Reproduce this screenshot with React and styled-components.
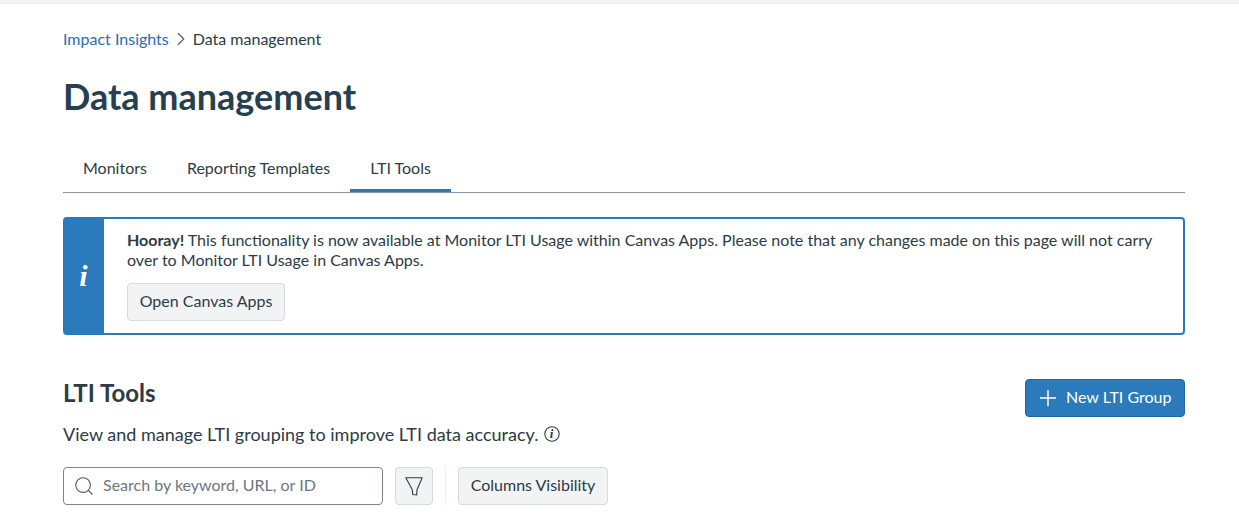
import React from "react";
import styled, { createGlobalStyle } from "styled-components";
import { ChevronRight, Search } from "lucide-react";

const GlobalStyle = createGlobalStyle`
  html, body {
    margin: 0;
    padding: 0;
    height: 100%;
    overflow: hidden;
    background: #fff;
    font-family: Lato, "Liberation Sans", sans-serif;
    color: #2d3b45;
  }
`;

const TopStrip = styled.div`
  height: 3px;
  background: #f2f4f4;
  border-bottom: 1px solid #eceeee;
`;

const Page = styled.main`
  padding: 23px 54px 0 63px;
`;

const Breadcrumbs = styled.nav`
  display: flex;
  align-items: center;
  height: 24px;
  font-size: 16px;
  line-height: 24px;
`;

const CrumbLink = styled.a`
  color: #2b6cb0;
`;

const CrumbSeparator = styled.span`
  display: flex;
  width: 24px;
  justify-content: center;
  color: #5f6b75;
`;

const Title = styled.h1`
  margin: 22px 0 0;
  font-size: 36px;
  line-height: 46px;
  font-weight: 700;
  color: #273f4f;
`;

const TabList = styled.div`
  display: flex;
  margin-top: 27px;
  height: 46px;
  border-bottom: 1px solid #8b96a2;
`;

const Tab = styled.div`
  height: 43px;
  padding: 0 20px;
  font-size: 16px;
  line-height: 43px;
  color: #2d3b45;
  border-bottom: ${(p) => (p.$active ? "3px solid #2b7abc" : "3px solid transparent")};
`;

const Alert = styled.section`
  display: flex;
  box-sizing: border-box;
  margin-top: 24px;
  height: 118px;
  border: 2px solid #2b7abc;
  border-radius: 4px;
`;

const AlertBadge = styled.div`
  display: flex;
  flex: 0 0 39px;
  align-items: center;
  justify-content: center;
  background: #2b7abc;
  color: #fff;
`;

const InfoGlyph = styled.span`
  font-family: "Liberation Serif", serif;
  font-size: 30px;
  font-style: italic;
  font-weight: 700;
  line-height: 1;
  margin-left: -2px;
`;

const AlertBody = styled.div`
  padding: 11px 24px 0 23px;
  font-size: 16px;
  line-height: 20px;
`;

const Button = styled.button`
  box-sizing: border-box;
  display: inline-flex;
  align-items: center;
  justify-content: center;
  height: 38px;
  padding: 0 12px 3px;
  font-family: inherit;
  font-size: 16px;
  color: #2d3b45;
  background: #f2f3f4;
  border: 1px solid #d5dadd;
  border-radius: 4px;
  white-space: nowrap;
`;

const AlertButton = styled(Button)`
  width: 158px;
  margin-top: 13px;
`;

const SectionHeader = styled.div`
  display: flex;
  justify-content: space-between;
  margin-top: 44px;
`;

const SectionTitle = styled.h2`
  margin: 0;
  font-size: 24px;
  line-height: 28px;
  font-weight: 700;
  color: #2d3b45;
`;

const Description = styled.p`
  display: flex;
  align-items: center;
  gap: 6px;
  margin: 15px 0 0;
  font-size: 18px;
  line-height: 24px;
`;

const PrimaryButton = styled(Button)`
  justify-content: flex-start;
  gap: 10px;
  width: 160px;
  padding: 0 0 3px 14px;
  color: #fff;
  background: #2b7abc;
  border-color: #24659c;

  svg {
    margin-top: 3px;
  }
`;

const Toolbar = styled.div`
  display: flex;
  align-items: center;
  margin-top: 21px;
`;

const SearchBox = styled.label`
  box-sizing: border-box;
  display: flex;
  align-items: center;
  gap: 8px;
  width: 320px;
  height: 38px;
  padding: 0 9px;
  border: 1px solid #79858f;
  border-radius: 4px;
  color: #4d5a64;
`;

const SearchInput = styled.input`
  flex: 1;
  min-width: 0;
  padding: 0 0 3px;
  border: 0;
  outline: 0;
  font-family: inherit;
  font-size: 16px;
  color: #2d3b45;

  &::placeholder {
    color: #6b7780;
    opacity: 1;
  }
`;

const IconButton = styled(Button)`
  width: 38px;
  margin-left: 12px;
  padding: 0;
`;

const Divider = styled.span`
  width: 1px;
  height: 38px;
  margin: 0 12px;
  background: #eceeef;
`;

const ColumnsButton = styled(Button)`
  width: 150px;
`;

const PlusIcon = () => (
  <svg width="16" height="16" viewBox="0 0 16 16" aria-hidden="true">
    <path d="M8 0v16M0 8h16" fill="none" stroke="currentColor" strokeWidth="1.5" />
  </svg>
);

const FunnelIcon = () => (
  <svg width="18" height="19" viewBox="0 0 18 19" aria-hidden="true">
    <path d="M.8.8h16.4L12 12.8l-.3 5.2-4-.5-.4-4.7z" fill="none" stroke="#2d3b45" strokeWidth="1.1" strokeLinejoin="round" />
  </svg>
);

const InfoCircle = () => (
  <svg width="16" height="16" viewBox="0 0 16 16" aria-hidden="true">
    <circle cx="8" cy="8" r="7.2" fill="none" stroke="#2d3b45" strokeWidth="1.1" />
    <text x="7.6" y="12.2" textAnchor="middle" fontFamily="Liberation Serif, serif" fontStyle="italic" fontWeight="700" fontSize="13" fill="#2d3b45">i</text>
  </svg>
);

export default function App() {
  return (
    <>
      <GlobalStyle />
      <TopStrip />
      <Page>
        <Breadcrumbs>
          <CrumbLink>Impact Insights</CrumbLink>
          <CrumbSeparator>
            <ChevronRight size={22} strokeWidth={1.5} />
          </CrumbSeparator>
          <span>Data management</span>
        </Breadcrumbs>
        <Title>Data management</Title>
        <TabList>
          <Tab>Monitors</Tab>
          <Tab>Reporting Templates</Tab>
          <Tab $active>LTI Tools</Tab>
        </TabList>
        <Alert>
          <AlertBadge>
            <InfoGlyph>i</InfoGlyph>
          </AlertBadge>
          <AlertBody>
            <strong>Hooray!</strong> This functionality is now available at Monitor LTI Usage within Canvas Apps. Please note that any changes made on this page will not carry over to Monitor LTI Usage in Canvas Apps.
            <div>
              <AlertButton>Open Canvas Apps</AlertButton>
            </div>
          </AlertBody>
        </Alert>
        <SectionHeader>
          <div>
            <SectionTitle>LTI Tools</SectionTitle>
            <Description>
              View and manage LTI grouping to improve LTI data accuracy. <InfoCircle />
            </Description>
          </div>
          <PrimaryButton>
            <PlusIcon />
            New LTI Group
          </PrimaryButton>
        </SectionHeader>
        <Toolbar>
          <SearchBox>
            <Search size={22} strokeWidth={1.2} />
            <SearchInput placeholder="Search by keyword, URL, or ID" />
          </SearchBox>
          <IconButton aria-label="Filter">
            <FunnelIcon />
          </IconButton>
          <Divider />
          <ColumnsButton>Columns Visibility</ColumnsButton>
        </Toolbar>
      </Page>
    </>
  );
}
